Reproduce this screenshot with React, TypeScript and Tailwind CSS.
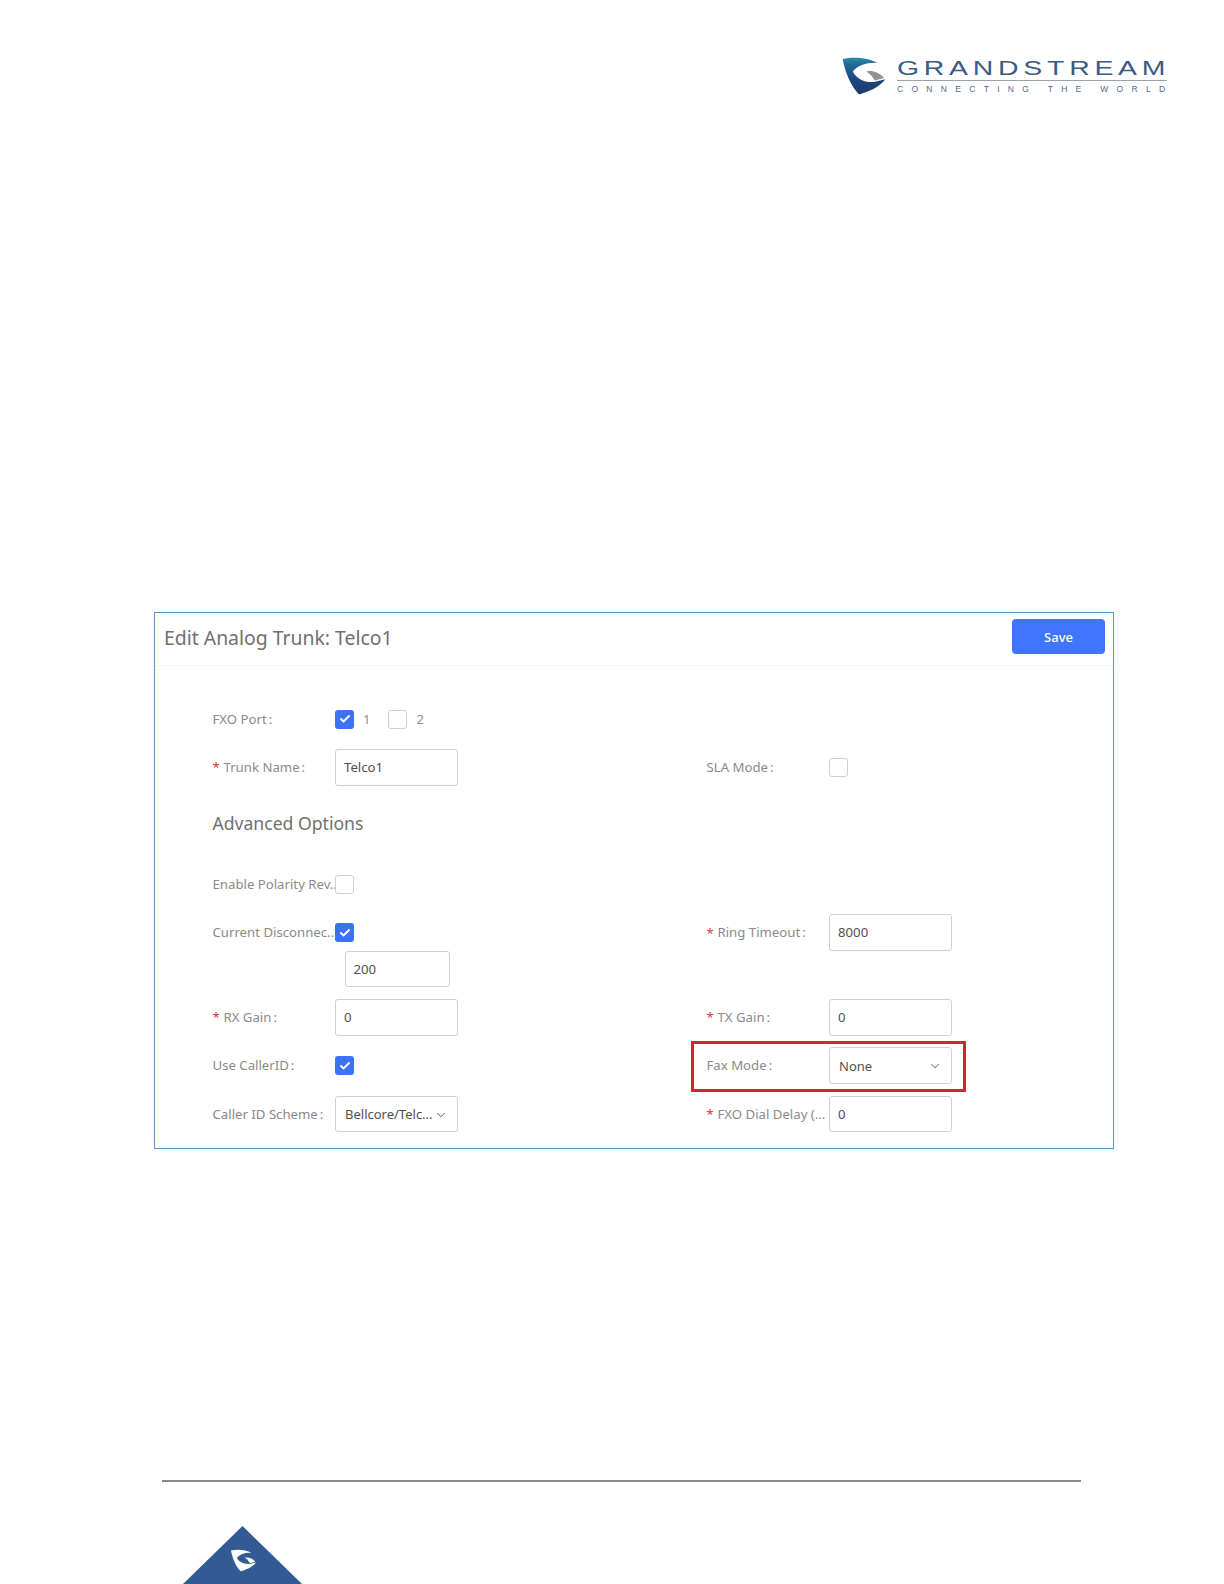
import { Check, ChevronDown } from "lucide-react";

const font = "font-['Noto_Sans','Open_Sans',sans-serif]";

function Swoosh({ className, blue, grey }: { className: string; blue: string; grey: string }) {
  return (
    <svg viewBox="65 50 140 120" className={className}>
      <defs>
        <linearGradient id="swooshGrad" x1="0" y1="0" x2="0" y2="1">
          <stop offset="0" stopColor="#2b8fa8" />
          <stop offset="0.18" stopColor="#1f6a96" />
          <stop offset="0.55" stopColor="#1c4a80" />
          <stop offset="1" stopColor="#1b3a6b" />
        </linearGradient>
      </defs>
      <path
        d="M70 58C105 50 150 55 176 70C145 68 115 78 101 96C112 118 135 130 165 128L200 120C180 145 150 158 120 166C95 140 78 100 70 58Z"
        fill={blue}
      />
      <path d="M142 96C160 92 180 98 196 116L168 124C162 112 152 102 142 96Z" fill={grey} />
    </svg>
  );
}

function Box({ checked }: { checked?: boolean }) {
  return checked ? (
    <span className="flex h-[19px] w-[19px] items-center justify-center rounded-[3px] bg-[#3b72f6]">
      <Check size={12} strokeWidth={4} color="#ffffff" />
    </span>
  ) : (
    <span className="block h-[19px] w-[19px] rounded-[3px] border border-[#cfcfcf] bg-white" />
  );
}

function Label({ text, req, colon = true }: { text: string; req?: boolean; colon?: boolean }) {
  return (
    <div className="flex w-[122.5px] shrink-0 items-center whitespace-nowrap pt-[1.5px] text-[13.2px] text-[#8a8a8a]">
      {req && <span className="mr-[5px] w-[6px] text-[13px] leading-none text-[#e0343c]">*</span>}
      <span>{text}</span>
      {colon && <span className="ml-[2px]">:</span>}
    </div>
  );
}

function Input({ value, className = "w-[123px]" }: { value: string; className?: string }) {
  return (
    <div className={`flex h-[36.5px] items-center rounded-[3px] border border-[#d0d0d0] bg-white pl-[8px] pt-[1.5px] text-[13.2px] text-[#505050] ${className}`}>
      {value}
    </div>
  );
}

function Select({ value, pad }: { value: string; pad: string }) {
  return (
    <div className={`flex h-[36.5px] w-[123px] items-center justify-between rounded-[3px] border border-[#d0d0d0] bg-white pt-[1.5px] text-[13px] text-[#505050] ${pad}`}>
      <span>{value}</span>
      <ChevronDown size={14} strokeWidth={1.75} color="#777777" />
    </div>
  );
}

function Field({ children }: { children: React.ReactNode }) {
  return <div className="flex h-[36.5px] items-center">{children}</div>;
}

export default function App() {
  return (
    <div className={`flex h-[1584px] w-[1224px] flex-col overflow-hidden bg-white ${font}`}>
      {/* brand header */}
      <header className="flex h-[612px] shrink-0 items-start justify-end pr-[57px] pt-[56px]">
        <div className="flex items-start">
          <Swoosh className="mr-[10px] -mt-px h-[42px] w-[46px]" blue="url(#swooshGrad)" grey="#8d9399" />
          <div className="flex w-[270px] flex-col font-['Liberation_Sans',sans-serif]">
            <div className="mt-[2px] h-[21px] origin-left scale-x-[1.42] whitespace-nowrap text-[20px] leading-[21px] tracking-[3.35px] text-[#3b5b85]">
              GRANDSTREAM
            </div>
            <div className="mt-px h-px w-full bg-[#9aa3ad]" />
            <div className="mt-[3px] whitespace-nowrap text-[8.5px] leading-[11px] tracking-[8.3px] text-[#4f6a8c]">
              CONNECTING THE WORLD
            </div>
          </div>
        </div>
      </header>

      {/* trunk panel */}
      <section className="ml-[154px] h-[537px] w-[960px] shrink-0 border-[1.5px] border-[#5f96c8]">
        <div className="flex h-[53px] items-center justify-between border-b border-[#f3f3f3] pl-[9px] pr-[8px]">
          <h1 className="mb-[2px] text-[19.4px] text-[#707070]">Edit Analog Trunk: Telco1</h1>
          <button className="mb-[5px] h-[35px] w-[93px] rounded-[4px] bg-[#3f76fb] pt-[3px] text-[13px] font-medium text-white">Save</button>
        </div>

        <div className="pl-[57.5px] pt-[35px]">
          <div className="grid grid-cols-[494px_1fr] gap-y-[11.5px]">
            <Field>
              <Label text="FXO Port" />
              <Box checked />
              <span className="ml-[9px] text-[13px] text-[#8f8f8f]">1</span>
              <span className="ml-[18px]"><Box /></span>
              <span className="ml-[9px] text-[13px] text-[#8f8f8f]">2</span>
            </Field>
            <div />
            <Field>
              <Label text="Trunk Name" req />
              <Input value="Telco1" />
            </Field>
            <Field>
              <Label text="SLA Mode" />
              <Box />
            </Field>
          </div>

          <h2 className="box-content flex h-[36px] items-center pt-[20px] text-[17.6px] text-[#707070]">Advanced Options</h2>

          <div className="mt-[24.5px] grid grid-cols-[494px_1fr] gap-y-[11.75px]">
            <Field>
              <Label text="Enable Polarity Rev..." colon={false} />
              <Box />
            </Field>
            <div />
            <Field>
              <Label text="Current Disconnec..." colon={false} />
              <Box checked />
            </Field>
            <Field>
              <Label text="Ring Timeout" req />
              <Input value="8000" />
            </Field>
            <div className="col-span-2 -mt-[11.75px] pl-[132px]">
              <Input value="200" className="w-[105px]" />
            </div>
            <Field>
              <Label text="RX Gain" req />
              <Input value="0" />
            </Field>
            <Field>
              <Label text="TX Gain" req />
              <Input value="0" />
            </Field>
            <Field>
              <Label text="Use CallerID" />
              <Box checked />
            </Field>
            <div className="relative">
              <Field>
                <Label text="Fax Mode" />
                <Select value="None" pad="pl-[9px] pr-[9px]" />
              </Field>
              <div className="absolute -top-[6.5px] left-[-16px] h-[51px] w-[275px] border-[3px] border-[#d8222f]" />
            </div>
            <Field>
              <Label text="Caller ID Scheme" />
              <Select value="Bellcore/Telc..." pad="pl-[9px] pr-[9px]" />
            </Field>
            <Field>
              <Label text="FXO Dial Delay (..." req colon={false} />
              <Input value="0" />
            </Field>
          </div>
        </div>
      </section>

      {/* page footer */}
      <footer className="flex flex-1 flex-col">
        <div className="ml-[162px] mt-[331px] h-[2px] w-[919px] bg-[#8a8a8a]" />
        <div className="relative ml-[183px] mt-[44px] h-[58px] w-[119px]">
          <svg viewBox="0 0 119 58" className="h-[58px] w-[119px]">
            <polygon points="59.5,0 119,58 0,58" fill="#325b94" />
          </svg>
          <Swoosh className="absolute left-[47px] top-[21px] h-[27px] w-[27px]" blue="#ffffff" grey="#ffffff" />
        </div>
      </footer>
    </div>
  );
}
